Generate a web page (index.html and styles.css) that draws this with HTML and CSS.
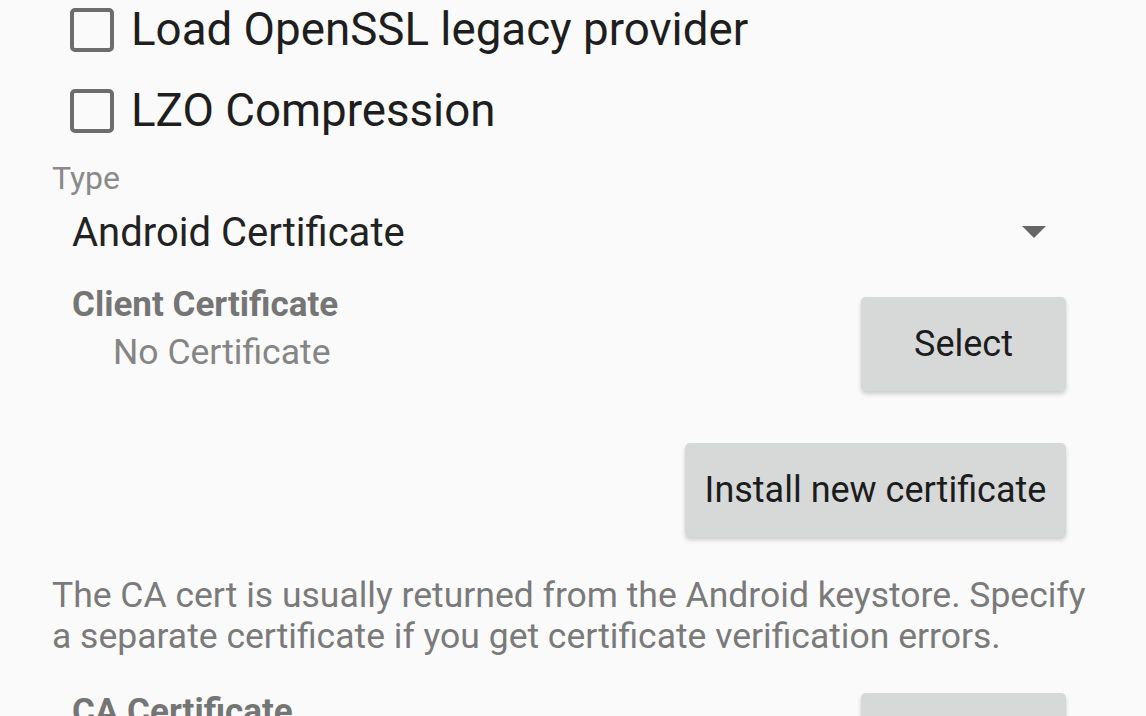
FILE: index.html
```html
<!DOCTYPE html>
<html lang="en">

<head>
  <meta charset="UTF-8">
  <meta name="viewport" content="width=device-width, initial-scale=1.0">
  <title>Authentication</title>
  <link rel="stylesheet" href="styles.css">
</head>

<body>
  <div id="settings">
    <label class="check-row">
      <span class="check-box"></span>
      <span class="check-text">Load OpenSSL legacy provider</span>
    </label>
    <label class="check-row">
      <span class="check-box"></span>
      <span class="check-text">LZO Compression</span>
    </label>

    <div class="field-label">Type</div>
    <div class="spinner">
      <span class="spinner-text">Android Certificate</span>
      <span class="spinner-arrow"></span>
    </div>

    <div class="cert-row">
      <div class="cert-info">
        <div class="cert-title">Client Certificate</div>
        <div class="cert-value">No Certificate</div>
      </div>
      <div class="btn btn-select">Select</div>
    </div>

    <div class="install-row">
      <div class="btn btn-install">Install new certificate</div>
    </div>

    <p class="help">The CA cert is usually returned from the Android keystore. Specify a separate certificate if you get certificate verification errors.</p>

    <div class="cert-row ca-row">
      <div class="cert-info">
        <div class="cert-title">CA Certificate</div>
      </div>
      <div class="btn btn-select"></div>
    </div>
  </div>
</body>

</html>
```

FILE: styles.css
```css
* {
  margin: 0;
  padding: 0;
  box-sizing: border-box;
}

html,
body {
  height: 100%;
  overflow: hidden;
}

body {
  background: #fafafa;
  font-family: Roboto, "Noto Sans", sans-serif;
  color: #212121;
}

#settings {
  padding: 0 80px 0 52px;
}

.check-row {
  display: flex;
  align-items: center;
  height: 81px;
  padding-left: 18px;
  margin-top: -11px;
}

.check-row + .check-row {
  margin-top: 0;
}

.check-box {
  width: 44px;
  height: 44px;
  border: 4px solid #6d6d6d;
  border-radius: 5px;
  flex-shrink: 0;
}

.check-text {
  margin-left: 17px;
  font-size: 45.7px;
  color: #1e1e1e;
}

.field-label {
  margin-top: 7px;
  font-size: 32px;
  line-height: 40px;
  color: #8a8a8a;
}

.spinner {
  display: flex;
  align-items: center;
  justify-content: space-between;
  height: 56px;
  margin-top: 6px;
  padding: 0 20px;
}

.spinner-text {
  font-size: 40px;
  color: #222;
}

.spinner-arrow {
  width: 0;
  height: 0;
  border-left: 12px solid transparent;
  border-right: 12px solid transparent;
  border-top: 12px solid #666;
}

.cert-row {
  display: flex;
  justify-content: space-between;
  align-items: flex-start;
  margin-top: 22px;
  padding-left: 20px;
}

.cert-title {
  font-size: 35px;
  font-weight: bold;
  color: #757575;
  line-height: 46px;
}

.cert-value {
  padding-left: 41px;
  font-size: 35.5px;
  color: #858585;
  line-height: 48px;
}

.btn {
  background: #d7d8d8;
  border-radius: 5px;
  box-shadow: 0 3px 4px rgba(0, 0, 0, 0.18);
  font-size: 36px;
  color: #1c1c1c;
  display: flex;
  align-items: center;
  justify-content: center;
  height: 94px;
}

.btn-select {
  width: 205px;
  margin-top: 15px;
}

.install-row {
  display: flex;
  justify-content: flex-end;
  margin-top: 52px;
}

.btn-install {
  width: 381px;
}

.help {
  margin-top: 38px;
  margin-right: -30px;
  font-size: 35.5px;
  line-height: 41px;
  color: #7a7a7a;
}

.ca-row {
  margin-top: 32px;
}

.ca-row .btn-select {
  margin-top: 4px;
}
```
